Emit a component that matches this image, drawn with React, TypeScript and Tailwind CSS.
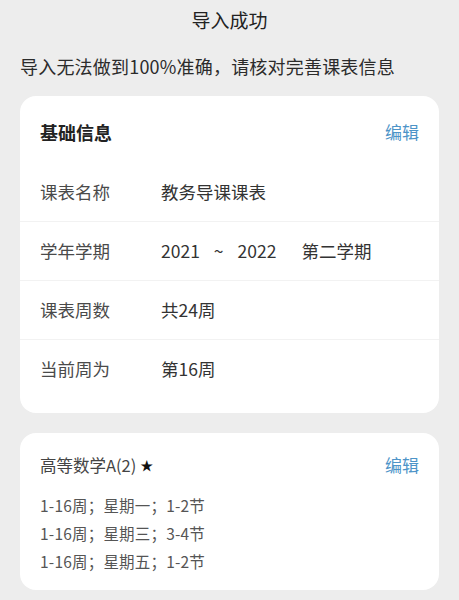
const font = { fontFamily: '"Noto Sans CJK SC", "Noto Sans", sans-serif' };

const rows = [
  { label: "课表名称", value: <span>教务导课课表</span> },
  {
    label: "学年学期",
    value: (
      <span className="flex items-center">
        <span>2021</span>
        <span className="ml-[14px]">~</span>
        <span className="ml-[14px]">2022</span>
        <span className="ml-[25px]">第二学期</span>
      </span>
    ),
  },
  { label: "课表周数", value: <span>共24周</span> },
  { label: "当前周为", value: <span>第16周</span> },
];

const slots = ["1-16周；星期一；1-2节", "1-16周；星期三；3-4节", "1-16周；星期五；1-2节"];

const App = () => {
  return (
    <div className="min-h-[600px] w-full bg-[#ededed] pb-4" style={font}>
      <div className="pt-[7px] text-center text-[19px] leading-[26px] text-[#222]">导入成功</div>
      <div className="mt-[20px] px-[20px] text-[18px] tracking-[0.2px] leading-[26px] text-[#2b2b2b]">
        导入无法做到100%准确，请核对完善课表信息
      </div>

      <section className="mx-[20px] mt-[17px] rounded-[16px] bg-white pb-[14px]">
        <div className="flex items-center justify-between px-[20px] pt-[23px] pb-[18px] leading-[26px]">
          <h2 className="text-[18px] font-bold text-[#222]">基础信息</h2>
          <button className="text-[17px] text-[#4d94c8]">编辑</button>
        </div>
        {rows.map((row, i) => (
          <div
            key={row.label}
            className={`flex h-[59px] items-center px-[20px] text-[17.5px] ${
              i < rows.length - 1 ? "border-b border-[#f2f2f2]" : ""
            }`}
          >
            <span className="w-[121px] shrink-0 text-[#4a4a4a]">{row.label}</span>
            <span className="text-[#333]">{row.value}</span>
          </div>
        ))}
      </section>

      <section className="mx-[20px] mt-[20px] rounded-[16px] bg-white px-[20px] pt-[20px] pb-[15px]">
        <div className="flex items-center justify-between leading-[24px]">
          <span className="flex items-center text-[16.5px] text-[#444]">
            高等数学A(2)
            <span className="ml-[4px] text-[13px] text-[#111]">★</span>
          </span>
          <button className="text-[17px] text-[#4d94c8]">编辑</button>
        </div>
        <div className="mt-[14px]">
          {slots.map((s, i) => (
            <div key={i} className="text-[15.5px] tracking-[0.2px] leading-[28px] text-[#555]">
              {s}
            </div>
          ))}
        </div>
      </section>
    </div>
  );
};

export default App;
